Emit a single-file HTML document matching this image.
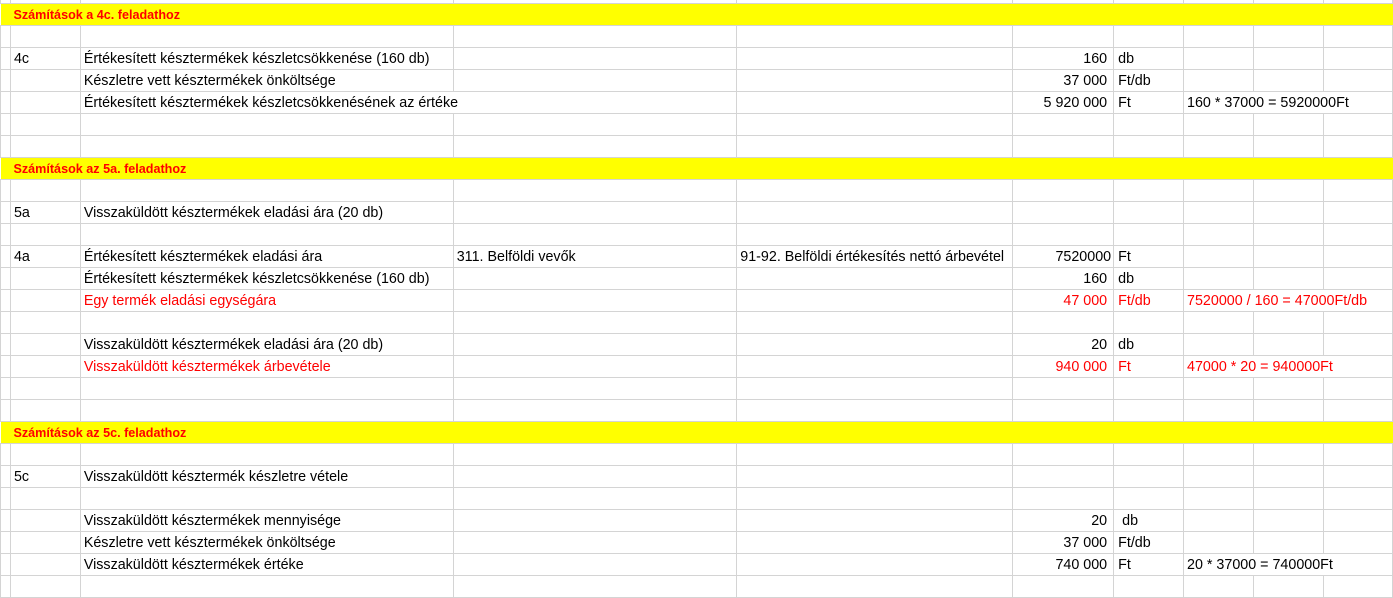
<!DOCTYPE html>
<html><head><meta charset="utf-8"><style>
body{margin:0;background:#fff;width:1393px;height:587px;overflow:hidden;font-family:"Liberation Sans",sans-serif;font-size:14.3px;color:#000}
table{border-collapse:collapse;table-layout:fixed;position:absolute;left:0;top:-19px}
td{border:1px solid #d4d4d4;height:20px;padding:1px 0 0 3px;white-space:nowrap;overflow:visible;line-height:20px;box-sizing:content-box}
td.r{text-align:right;padding:1px 6px 0 0}
td.r2{text-align:right;padding:1px 2px 0 0}
td.u{padding-left:4px}
tr.y td{background:#ffff00;color:#f00;font-weight:bold;border-left:none;border-right:none;font-size:12.6px}
.red{color:#f00}
</style></head><body>
<table>
<colgroup><col style="width:10px"><col style="width:70px"><col style="width:373px"><col style="width:284px"><col style="width:276px"><col style="width:101px"><col style="width:70px"><col style="width:70px"><col style="width:70px"><col style="width:69px"></colgroup>
<tr><td></td><td></td><td></td><td></td><td></td><td></td><td></td><td></td><td></td><td></td></tr>
<tr class="y"><td></td><td colspan="9">Számítások a 4c. feladathoz</td></tr>
<tr><td></td><td></td><td></td><td></td><td></td><td></td><td></td><td></td><td></td><td></td></tr>
<tr><td></td><td>4c</td><td>Értékesített késztermékek készletcsökkenése (160 db)</td><td></td><td></td><td class="r">160</td><td class="u">db</td><td></td><td></td><td></td></tr>
<tr><td></td><td></td><td>Készletre vett késztermékek önköltsége</td><td></td><td></td><td class="r">37 000</td><td class="u">Ft/db</td><td></td><td></td><td></td></tr>
<tr><td></td><td></td><td colspan="2">Értékesített késztermékek készletcsökkenésének az értéke</td><td></td><td class="r">5 920 000</td><td class="u">Ft</td><td colspan="3">160 * 37000 = 5920000Ft</td></tr>
<tr><td></td><td></td><td></td><td></td><td></td><td></td><td></td><td></td><td></td><td></td></tr>
<tr><td></td><td></td><td></td><td></td><td></td><td></td><td></td><td></td><td></td><td></td></tr>
<tr class="y"><td></td><td colspan="9">Számítások az 5a. feladathoz</td></tr>
<tr><td></td><td></td><td></td><td></td><td></td><td></td><td></td><td></td><td></td><td></td></tr>
<tr><td></td><td>5a</td><td>Visszaküldött késztermékek eladási ára (20 db)</td><td></td><td></td><td></td><td></td><td></td><td></td><td></td></tr>
<tr><td></td><td></td><td></td><td></td><td></td><td></td><td></td><td></td><td></td><td></td></tr>
<tr><td></td><td>4a</td><td>Értékesített késztermékek eladási ára</td><td>311. Belföldi vevők</td><td>91-92. Belföldi értékesítés nettó árbevétel</td><td class="r2">7520000</td><td class="u">Ft</td><td></td><td></td><td></td></tr>
<tr><td></td><td></td><td>Értékesített késztermékek készletcsökkenése (160 db)</td><td></td><td></td><td class="r">160</td><td class="u">db</td><td></td><td></td><td></td></tr>
<tr class="red"><td></td><td></td><td>Egy termék eladási egységára</td><td></td><td></td><td class="r">47 000</td><td class="u">Ft/db</td><td colspan="3">7520000 / 160 = 47000Ft/db</td></tr>
<tr><td></td><td></td><td></td><td></td><td></td><td></td><td></td><td></td><td></td><td></td></tr>
<tr><td></td><td></td><td>Visszaküldött késztermékek eladási ára (20 db)</td><td></td><td></td><td class="r">20</td><td class="u">db</td><td></td><td></td><td></td></tr>
<tr class="red"><td></td><td></td><td>Visszaküldött késztermékek árbevétele</td><td></td><td></td><td class="r">940 000</td><td class="u">Ft</td><td colspan="3">47000 * 20 = 940000Ft</td></tr>
<tr><td></td><td></td><td></td><td></td><td></td><td></td><td></td><td></td><td></td><td></td></tr>
<tr><td></td><td></td><td></td><td></td><td></td><td></td><td></td><td></td><td></td><td></td></tr>
<tr class="y"><td></td><td colspan="9">Számítások az 5c. feladathoz</td></tr>
<tr><td></td><td></td><td></td><td></td><td></td><td></td><td></td><td></td><td></td><td></td></tr>
<tr><td></td><td>5c</td><td>Visszaküldött késztermék készletre vétele</td><td></td><td></td><td></td><td></td><td></td><td></td><td></td></tr>
<tr><td></td><td></td><td></td><td></td><td></td><td></td><td></td><td></td><td></td><td></td></tr>
<tr><td></td><td></td><td>Visszaküldött késztermékek mennyisége</td><td></td><td></td><td class="r">20</td><td class="u" style="padding-left:8px">db</td><td></td><td></td><td></td></tr>
<tr><td></td><td></td><td>Készletre vett késztermékek önköltsége</td><td></td><td></td><td class="r">37 000</td><td class="u">Ft/db</td><td></td><td></td><td></td></tr>
<tr><td></td><td></td><td>Visszaküldött késztermékek értéke</td><td></td><td></td><td class="r">740 000</td><td class="u">Ft</td><td colspan="3">20 * 37000 = 740000Ft</td></tr>
<tr><td></td><td></td><td></td><td></td><td></td><td></td><td></td><td></td><td></td><td></td></tr>
</table>
</body></html>
